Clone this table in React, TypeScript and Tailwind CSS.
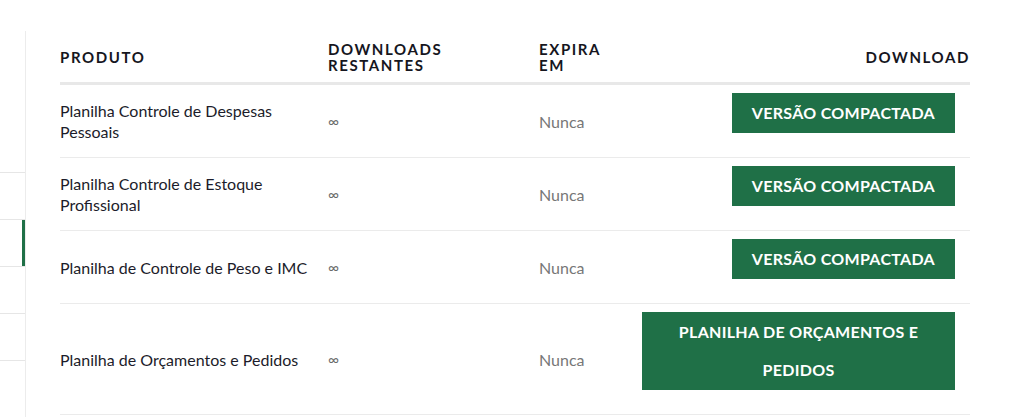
import React from "react";

type Download = {
  product: string;
  remaining: string;
  expires: string;
  label: string;
  wide?: boolean;
};

const downloads: Download[] = [
  {
    product: "Planilha Controle de Despesas Pessoais",
    remaining: "∞",
    expires: "Nunca",
    label: "Versão Compactada",
  },
  {
    product: "Planilha Controle de Estoque Profissional",
    remaining: "∞",
    expires: "Nunca",
    label: "Versão Compactada",
  },
  {
    product: "Planilha de Controle de Peso e IMC",
    remaining: "∞",
    expires: "Nunca",
    label: "Versão Compactada",
  },
  {
    product: "Planilha de Orçamentos e Pedidos",
    remaining: "∞",
    expires: "Nunca",
    label: "Planilha de Orçamentos e Pedidos",
    wide: true,
  },
];

function Sidebar() {
  return (
    <aside className="flex w-[26px] shrink-0 flex-col border-r border-[#ececec]">
      <div className="h-[141px]" />
      <ul className="border-t border-[#e6e6e6]">
        {[0, 1, 2, 3].map((index) => (
          <li
            key={index}
            className="flex h-[47px] justify-end border-b border-[#e6e6e6]"
          >
            {index === 1 ? <span className="w-[3px] bg-[#1f7047]" /> : null}
          </li>
        ))}
      </ul>
    </aside>
  );
}

function DownloadButton({ item }: { item: Download }) {
  return (
    <a
      href="#"
      className={`block bg-[#1f7047] px-5 py-px text-center text-base font-bold uppercase leading-[38px] tracking-[0.3px] text-white ${
        item.wide ? "w-[313px]" : ""
      }`}
    >
      {item.label}
    </a>
  );
}

export default function App() {
  return (
    <div className="flex min-h-[417px] bg-white pt-[31px] font-['Lato',sans-serif]">
      <Sidebar />
      <main className="pl-[34px]">
        <div className="w-[910px]">
          <div className="grid h-[54px] grid-cols-[268px_211px_1fr] items-center border-b-[3px] border-[#e8e8e8] text-[15px] font-bold uppercase leading-4 tracking-[1.6px] text-[#16161e]">
            <div>Produto</div>
            <div>
              Downloads
              <br />
              Restantes
            </div>
            <div className="flex items-center justify-between">
              <div>
                Expira
                <br />
                em
              </div>
              <div>Download</div>
            </div>
          </div>
          {downloads.map((item) => (
            <div
              key={item.product}
              className="grid grid-cols-[268px_211px_1fr] items-center border-b border-[#ebebeb] text-base leading-[21px]"
            >
              <div className="pr-4 text-[#1c1c2a]">{item.product}</div>
              <div className="text-[15px] text-[#6b6b6b]">{item.remaining}</div>
              <div className="flex items-center justify-between">
                <span className="text-[#777]">{item.expires}</span>
                <div className="pb-6 pr-[15px] pt-2">
                  <DownloadButton item={item} />
                </div>
              </div>
            </div>
          ))}
        </div>
      </main>
    </div>
  );
}
